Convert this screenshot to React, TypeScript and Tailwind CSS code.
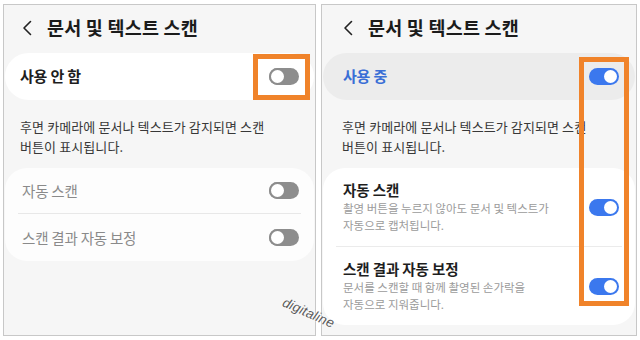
import { ReactNode } from "react";

const FONT = { fontFamily: '"Noto Sans CJK KR", "Noto Sans", sans-serif' };

function Chevron() {
  return (
    <svg width="10" height="16" viewBox="0 0 10 16" className="shrink-0">
      <path d="M8.5 1.5 L2 8 L8.5 14.5" fill="none" stroke="#222" strokeWidth="1.6" strokeLinecap="round" strokeLinejoin="round" />
    </svg>
  );
}

function Toggle({ on }: { on: boolean }) {
  if (on) {
    return (
      <div className="relative w-[30px] h-[17px] rounded-full bg-[#3b78ee] shrink-0">
        <div className="absolute right-[2px] top-[2px] w-[13px] h-[13px] rounded-full bg-white" />
      </div>
    );
  }
  return (
    <div className="relative w-[30px] h-[17px] rounded-full bg-[#8d8d8d] shrink-0">
      <div className="absolute left-0 top-0 w-[17px] h-[17px] rounded-full bg-white border-[2px] border-[#8d8d8d]" />
    </div>
  );
}

function Header({ pad }: { pad: string }) {
  return (
    <div className={`flex items-center h-[46px] gap-[15px] ${pad}`}>
      <Chevron />
      <span className="text-[18.5px] font-bold text-[#1b1b1b] tracking-[0.2px]">문서 및 텍스트 스캔</span>
    </div>
  );
}

function Description({ pad }: { pad: string }) {
  return (
    <p className={`${pad} pt-[17px] text-[13px] leading-[20px] text-[#383838] tracking-[0.1px]`}>
      후면 카메라에 문서나 텍스트가 감지되면 스캔
      <br />
      버튼이 표시됩니다.
    </p>
  );
}

function Panel({ children, width }: { children: ReactNode; width: string }) {
  return (
    <div className={`relative ${width} h-[332px] border border-[#c8c8c8] bg-[#f6f6f6] overflow-hidden`}>
      {children}
    </div>
  );
}

export default function App() {
  return (
    <div className="relative w-[640px] h-[340px] bg-white overflow-hidden" style={FONT}>
      <div className="flex gap-[5px] pl-[3px] pt-[4px]">
        {/* 왼쪽: 사용 안 함 */}
        <Panel width="w-[313px]">
          <Header pad="pl-[18px]" />
          <div className="mt-[2px] mx-[1px] h-[47px] rounded-[24px] bg-white flex items-center justify-between pl-[15px] pr-[15px]">
            <span className="text-[15px] font-bold text-[#1e1e1e] tracking-[-0.2px]">사용 안 함</span>
            <Toggle on={false} />
          </div>
          <Description pad="pl-[16px]" />
          <div className="mt-[11px] mx-[1px] rounded-[22px] bg-[#fdfdfd]">
            <div className="h-[45px] flex items-center justify-between pl-[17px] pr-[15px]">
              <span className="text-[14.5px] text-[#8a8a8a] tracking-[-0.2px]">자동 스캔</span>
              <Toggle on={false} />
            </div>
            <div className="mx-[13px] h-px bg-[#e8e8e8]" />
            <div className="h-[47px] flex items-center justify-between pl-[17px] pr-[15px]">
              <span className="text-[14.5px] text-[#8a8a8a] tracking-[-0.2px]">스캔 결과 자동 보정</span>
              <Toggle on={false} />
            </div>
          </div>
          <div className="absolute left-[249px] top-[49px] w-[57px] h-[46px] border-[5px] border-[#f0832a]" />
        </Panel>

        {/* 오른쪽: 사용 중 */}
        <Panel width="w-[316px]">
          <Header pad="pl-[21px]" />
          <div className="mt-[2px] mx-[1px] h-[47px] rounded-[24px] bg-[#ececec] flex items-center justify-between pl-[20px] pr-[16px]">
            <span className="text-[15px] font-bold text-[#3a6fd6] tracking-[-0.2px]">사용 중</span>
            <Toggle on={true} />
          </div>
          <Description pad="pl-[20px]" />
          <div className="mt-[11px] mx-[1px] rounded-[22px] bg-white">
            <div className="h-[78px] flex items-center justify-between pl-[20px] pr-[16px]">
              <div>
                <div className="text-[14.5px] leading-[20px] font-bold text-[#1e1e1e] tracking-[-0.1px]">자동 스캔</div>
                <div className="text-[11.5px] leading-[17px] text-[#9b9b9b]">
                  촬영 버튼을 누르지 않아도 문서 및 텍스트가
                  <br />
                  자동으로 캡처됩니다.
                </div>
              </div>
              <Toggle on={true} />
            </div>
            <div className="mx-[13px] h-px bg-[#ebebeb]" />
            <div className="h-[78px] flex items-center justify-between pl-[20px] pr-[16px]">
              <div>
                <div className="text-[14.5px] leading-[20px] font-bold text-[#1e1e1e] tracking-[-0.1px]">스캔 결과 자동 보정</div>
                <div className="text-[11.5px] leading-[17px] text-[#9b9b9b]">
                  문서를 스캔할 때 함께 촬영된 손가락을
                  <br />
                  자동으로 지워줍니다.
                </div>
              </div>
              <Toggle on={true} />
            </div>
          </div>
          <div className="absolute left-[257px] top-[52px] w-[50px] h-[249px] border-[5px] border-[#f0832a]" />
        </Panel>
      </div>

      {/* watermark */}
      <div
        className="absolute left-[283px] top-[292px] origin-left rotate-[24deg] text-[13.5px] italic text-[#5a5a5a] tracking-[0.2px]"
        style={{ fontFamily: '"Liberation Sans", sans-serif', textShadow: "0 0 2px #fff, 0 0 2px #fff" }}
      >
        digitaline
      </div>
    </div>
  );
}
